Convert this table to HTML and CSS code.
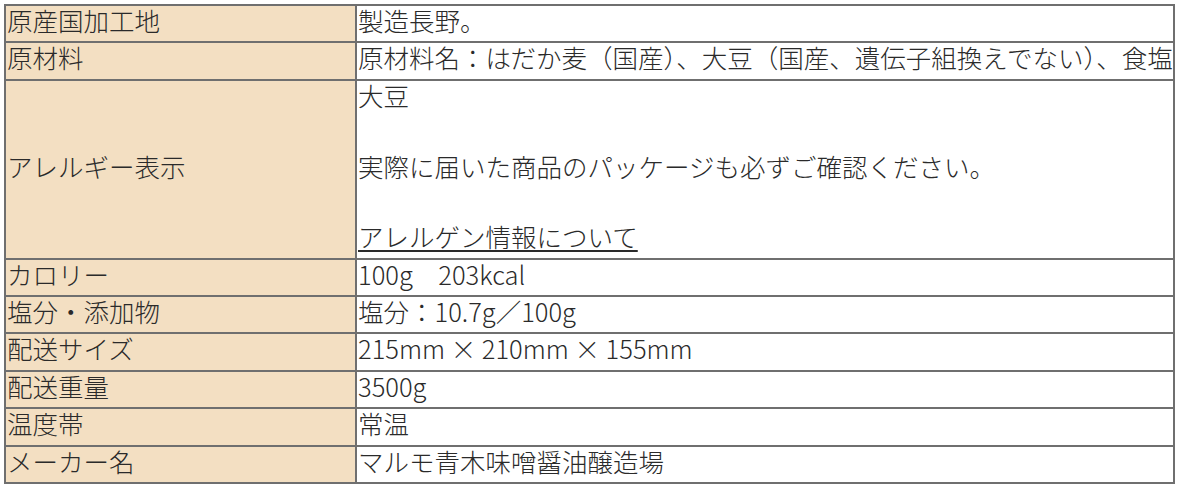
FILE: index.html
```html
<!DOCTYPE html>
<html lang="ja">
<head>
<meta charset="utf-8">
<link rel="stylesheet" href="styles.css">
</head>
<body>
<dl class="spec">
  <dt class="label"><span class="txt">原産国加工地</span></dt><dd class="value"><span class="txt">製造長野。</span></dd>
  <dt class="label"><span class="txt">原材料</span></dt><dd class="value"><span class="txt">原材料名：はだか麦（国産）、大豆（国産、遺伝子組換えでない）、食塩</span></dd>
  <dt class="label"><span class="txt">アレルギー表示</span></dt><dd class="value"><span class="txt">大豆<br><br>実際に届いた商品のパッケージも必ずご確認ください。<br><br><a class="link" href="#">アレルゲン情報について</a></span></dd>
  <dt class="label"><span class="txt">カロリー</span></dt><dd class="value"><span class="txt">100g　203kcal</span></dd>
  <dt class="label"><span class="txt">塩分・添加物</span></dt><dd class="value"><span class="txt">塩分：10.7g／100g</span></dd>
  <dt class="label"><span class="txt">配送サイズ</span></dt><dd class="value"><span class="txt">215mm × 210mm × 155mm</span></dd>
  <dt class="label"><span class="txt">配送重量</span></dt><dd class="value"><span class="txt">3500g</span></dd>
  <dt class="label"><span class="txt">温度帯</span></dt><dd class="value"><span class="txt">常温</span></dd>
  <dt class="label"><span class="txt">メーカー名</span></dt><dd class="value"><span class="txt">マルモ青木味噌醤油醸造場</span></dd>
</dl>
</body>
</html>
```
FILE: styles.css
```css
html, body {
  margin: 0;
  background: #ffffff;
}
body {
  padding: 4px 0 0 4px;
  font-family: "Noto Sans CJK JP", "Noto Sans", sans-serif;
  color: #2a2a2a;
}
.spec {
  box-sizing: border-box;
  margin: 0;
  width: 1171px;
  display: grid;
  grid-template-columns: 349px 1fr;
  gap: 2px;
  padding: 2px;
  background: #6f6f6f;
  font-size: 25.5px;
  line-height: 35.38px;
  font-weight: 300;
}
.label {
  display: flex;
  align-items: center;
  padding-left: 1px;
  background: #f3dfc2;
  white-space: nowrap;
}
.label .txt {
  line-height: 27.38px;
  margin-bottom: 8px;
}
.value {
  margin: 0;
  padding-left: 1px;
  background: #ffffff;
  white-space: nowrap;
}
.value .txt {
  vertical-align: 4px;
  line-height: 0;
}
.link {
  color: #2a2a2a;
  text-decoration: underline;
  text-decoration-thickness: 2px;
  text-underline-offset: 3px;
}
```
